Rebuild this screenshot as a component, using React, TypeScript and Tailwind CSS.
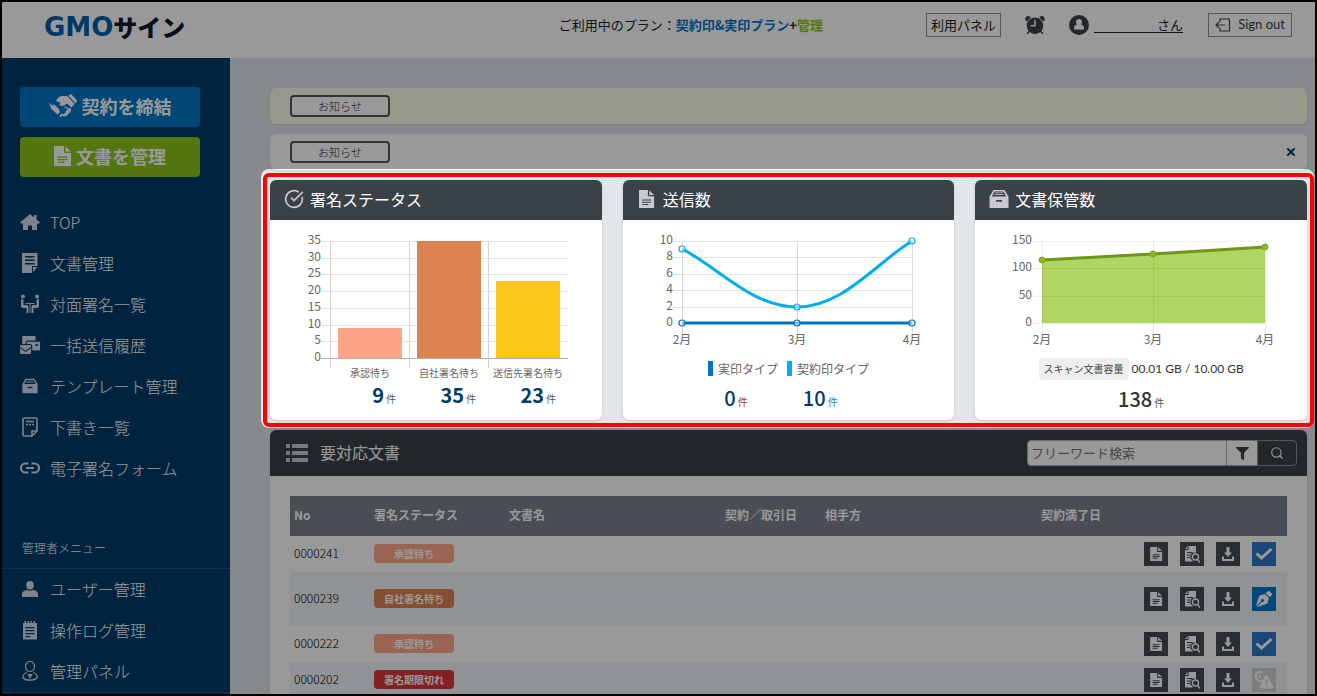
import React from "react";
import { CircleCheckBig, Search, X } from "lucide-react";
import { FaFilter, FaMailBulk, FaPenNib } from "react-icons/fa";
import { IoAlarm } from "react-icons/io5";

interface IconProps {
  className?: string;
}

const HomeIcon = ({ className }: IconProps) => (
  <svg viewBox="0 0 20 16" className={className} fill="currentColor" aria-hidden="true">
    <path d="M10 0l4 3.400V1h2.500v4.500L20 8.500l-.8 1H17V16h-5v-4.500H8V16H3V9.500H.8L0 8.500z" />
  </svg>
);

const FileIcon = ({ className }: IconProps) => (
  <svg viewBox="0 0 18 20" className={className} fill="currentColor" aria-hidden="true">
    <path
      fillRule="evenodd"
      d="M0 0h10v7h7v13H0zM3.500 10.500v1.300h10v-1.300zM3.500 13v1.300h10V13zM3.500 15.500v1.300h7v-1.300z"
    />
    <path d="M11.500 0.500l5.500 5h-5.500z" />
  </svg>
);

const NoteIcon = ({ className }: IconProps) => (
  <svg viewBox="0 0 16 20" className={className} fill="currentColor" aria-hidden="true">
    <path fillRule="evenodd" d="M0 0h15.500v13H10v7H0zM3 3v1.500h9.500V3zM3 6.500V8h9.500V6.500zM3 10v1.500h9.500V10z" />
    <path d="M11 14h4.500L11 19z" />
  </svg>
);

const MeetingIcon = ({ className }: IconProps) => (
  <svg viewBox="0 0 20 20" className={className} fill="currentColor" aria-hidden="true">
    <circle cx="3" cy="2.500" r="2" />
    <circle cx="17" cy="2.500" r="2" />
    <path d="M1 6q0-1 1-1t1.500 1v5h3.500q1.500 0 1.500 1.500V19H6.500v-5H3q-2 0-2-2zM19 6q0-1-1-1t-1.500 1v5H13q-1.500 0-1.500 1.500V19h2v-5H17q2 0 2-2z" />
    <path d="M5.500 9h9v1h-9zM9.500 10h1v9h-1z" />
  </svg>
);

const DrawerIcon = ({ className }: IconProps) => (
  <svg viewBox="0 0 20 18" className={className} fill="currentColor" aria-hidden="true">
    <path fillRule="evenodd" d="M4.500 0h11L19.500 6.500V18H.5V6.500zM5.500 1.500L2.800 6.500h14.400l-2.700-5zM7 10v1.800h6V10z" />
    <path d="M6 2.500h8v.8H6zM5.300 4.200h9.400V5H5.300z" />
  </svg>
);

const DraftIcon = ({ className }: IconProps) => (
  <svg viewBox="0 0 16 20" className={className} fill="none" stroke="currentColor" strokeWidth="1.600" aria-hidden="true">
    <path d="M10 19H2Q1 19 1 18V2Q1 1 2 1H14Q15 1 15 2V14zM10 19V14H15" />
    <path d="M4 4.500H12" />
    <path d="M4 7.500H12" strokeDasharray="2 1" />
  </svg>
);

const ChainIcon = ({ className }: IconProps) => (
  <svg viewBox="0 0 20 12" className={className} fill="none" stroke="currentColor" strokeWidth="2.200" aria-hidden="true">
    <path d="M8.500 1.500H5.500a4.500 4.500 0 0 0 0 9H8.500M11.500 1.500H14.500a4.500 4.500 0 0 1 0 9H11.500M6 6H14" />
  </svg>
);

const PersonIcon = ({ className }: IconProps) => (
  <svg viewBox="0 0 16 16" className={className} fill="currentColor" aria-hidden="true">
    <ellipse cx="8" cy="4.200" rx="3.800" ry="4.200" />
    <path d="M0 16v-3q0-3 5-4.200 3 2 6 0Q16 10 16 13v3z" />
  </svg>
);

const LogIcon = ({ className }: IconProps) => (
  <svg viewBox="0 0 16 20" className={className} fill="currentColor" aria-hidden="true">
    <path fillRule="evenodd" d="M1 3h14v16.500H1zM3.500 7v1.300h9V7zM3.500 10v1.300h9V10zM3.500 13v1.300h9V13zM3.500 16v1.300h5V16z" />
    <path d="M2.500 1h1.500v3H2.500zM5.500 1H7v3H5.500zM8.500 1H10v3H8.500zM11.500 1H13v3h-1.500z" />
  </svg>
);

const AdminIcon = ({ className }: IconProps) => (
  <svg viewBox="0 0 16 20" className={className} fill="none" stroke="currentColor" strokeWidth="1.200" aria-hidden="true">
    <ellipse cx="8" cy="5.500" rx="4.500" ry="5" />
    <path d="M5 11.500Q.7 13 .7 16.500 3 19.200 8 19.200t7.300-2.700Q15.300 13 11 11.500" />
    <path d="M5.500 13h5L8 18z" fill="currentColor" stroke="none" />
  </svg>
);

const HandshakeIcon = ({ className }: IconProps) => (
  <svg viewBox="0 0 28 24" className={className} fill="currentColor" aria-hidden="true">
    <path d="M19.500 1.500L22 0l6 6.500-1.500 3z" />
    <path d="M7 7Q9.500 2 13 2L18.500 2l7 8-3 3.500-4.500-4Q15 12 12 12 9.500 11.500 11.500 8.500z" />
    <path d="M0 8.500l3.500 3L5 10.500l4.500 4 1.500 3.500L8.500 20.500 2.500 15z" />
    <path
      d="M11.500 22l1.500-1.500M15 21l4-3M17.500 18l3.500-3"
      stroke="currentColor"
      strokeWidth="2"
      strokeLinecap="round"
    />
    <path d="M15.500 12.500l5.500 3.500q1 2-1.500 2.500l-2.500 3q-2 1-3.500-.5" fill="none" stroke="currentColor" strokeWidth="1.200" />
  </svg>
);

const UserCircleIcon = ({ className }: IconProps) => (
  <svg viewBox="0 0 20 20" className={className} aria-hidden="true">
    <circle cx="10" cy="10" r="10" fill="currentColor" />
    <path d="M10 4a3 3 0 0 1 3 3q0 1.500-1 2.500 3 .8 3 3.500v1.500H5V13q0-2.700 3-3.500Q7 8.500 7 7a3 3 0 0 1 3-3z" fill="#fff" />
  </svg>
);

const SignOutIcon = ({ className }: IconProps) => (
  <svg viewBox="0 0 16 14" className={className} fill="none" stroke="currentColor" strokeWidth="1.200" aria-hidden="true">
    <path d="M5 4V1H14.500V13H5V10M10 7H1M4 4L1 7L4 10" />
  </svg>
);

const ListIcon = ({ className }: IconProps) => (
  <svg viewBox="0 0 22 18" className={className} fill="currentColor" aria-hidden="true">
    <path d="M0 0h4v4H0zM6 0h16v4H6zM0 7h4v4H0zM6 7h16v4H6zM0 14h4v4H0zM6 14h16v4H6z" />
  </svg>
);

const PreviewIcon = ({ className }: IconProps) => (
  <svg viewBox="0 0 16 17" className={className} fill="currentColor" aria-hidden="true">
    <path fillRule="evenodd" d="M4.500 0H12v7a4 4 0 0 0-4 7l1 1.500H1V4h3.500zM3 6v1h7V6zM3 8.500v1h4.500v-1zM3 11v1h4v-1z" />
    <path d="M3.500 0v3H1z" />
    <path d="M13.500 13.500L16 16.500" stroke="currentColor" strokeWidth="1.500" />
    <circle cx="11.500" cy="11" r="3" fill="none" stroke="currentColor" strokeWidth="1.300" />
  </svg>
);

const DownloadIcon = ({ className }: IconProps) => (
  <svg viewBox="0 0 12 14" className={className} fill="currentColor" aria-hidden="true">
    <path d="M4.500 0h3v5.500H10L6 10 2 5.500h2.500zM0 9.500h2V12h8V9.500h2V14H0z" />
  </svg>
);

const CheckIcon = ({ className }: IconProps) => (
  <svg viewBox="0 0 18 14" className={className} fill="none" stroke="currentColor" strokeWidth="3" aria-hidden="true">
    <path d="M1.500 6.500L6.500 11L16.500 2" />
  </svg>
);

const ExpiredIcon = ({ className }: IconProps) => (
  <svg viewBox="0 0 20 20" className={className} fill="none" stroke="currentColor" aria-hidden="true">
    <circle cx="6.500" cy="6.500" r="4.700" strokeWidth="1.800" strokeDasharray="24 6" />
    <path d="M6.500 4v3H4" strokeWidth="1" />
    <path d="M12.500 5l7 13h-14z" fill="currentColor" strokeLinejoin="round" />
    <path d="M12.500 9v5M12.500 15.500v1.500" stroke="#d2d2d2" strokeWidth="1.500" />
  </svg>
);

const menu = [
  { name: "TOP", icon: <HomeIcon className="h-4 w-5" /> },
  { name: "文書管理", icon: <NoteIcon className="h-5 w-4" /> },
  { name: "対面署名一覧", icon: <MeetingIcon className="size-5" /> },
  { name: "一括送信履歴", icon: <FaMailBulk className="size-5" /> },
  { name: "テンプレート管理", icon: <DrawerIcon className="h-4 w-4" /> },
  { name: "下書き一覧", icon: <DraftIcon className="h-5 w-4" /> },
  { name: "電子署名フォーム", icon: <ChainIcon className="h-3 w-5" /> },
];

const adminMenu = [
  { name: "ユーザー管理", icon: <PersonIcon className="size-4" /> },
  { name: "操作ログ管理", icon: <LogIcon className="h-5 w-4" /> },
  { name: "管理パネル", icon: <AdminIcon className="h-5 w-4" /> },
];

const MenuLink = ({ name, icon }: { name: string; icon: React.ReactNode }) => (
  <a href="#" className="flex h-[41px] items-center gap-[10px] pb-[2px] pl-[18px] text-base font-light text-white">
    <span className="flex w-5 justify-center text-[#d2dce4]">{icon}</span>
    {name}
  </a>
);

const Card = ({ title, icon, children }: { title: string; icon: React.ReactNode; children: React.ReactNode }) => (
  <section className="rounded-md bg-white shadow">
    <h2 className="flex h-10 items-center gap-[6px] rounded-t-md bg-[#3a4147] pb-[2px] pl-[14px] text-base text-white">
      <span className="flex w-5 justify-center text-[#c8cacc]">{icon}</span>
      {title}
    </h2>
    <div className="h-[200px]">{children}</div>
  </section>
);

const Count = ({
  value,
  unit = "text-[#555]",
  tone = "font-bold text-[#003c69]",
}: {
  value: number;
  unit?: string;
  tone?: string;
}) => (
  <p className="text-right">
    <span className={`text-xl leading-6 ${tone}`}>{value}</span>
    <span className={`ml-[2px] text-[10px] ${unit}`}>件</span>
  </p>
);

const bars = [
  { label: "承認待ち", value: 9, color: "#ffa585" },
  { label: "自社署名待ち", value: 35, color: "#dc8150" },
  { label: "送信先署名待ち", value: 23, color: "#fac81a" },
];

const BarChart = () => (
  <svg width="320" height="163" className="block" fontSize="12" fill="#666">
    {[35, 30, 25, 20, 15, 10, 5, 0].map((tick, i) => (
      <g key={tick}>
        <rect x="51" y={21 + Math.round(i * 16.7)} width="247" height="1" fill={tick === 0 ? "#b0b0b0" : "#e3e3e3"} />
        <text x="51" y={24 + Math.round(i * 16.7)} textAnchor="end">
          {tick}
        </text>
      </g>
    ))}
    {bars.map((bar, i) => (
      <g key={bar.label}>
        <rect x={60 + i * 79} y="21" width="1" height="127" fill="#d4d4d4" />
        <rect
          x={68 + i * 79}
          y={138 - Math.round(bar.value * 3.343)}
          width="64"
          height={Math.round(bar.value * 3.343)}
          fill={bar.color}
        />
        <text x={100 + i * 79} y="157" textAnchor="middle" fontSize="10">
          {bar.label}
        </text>
      </g>
    ))}
  </svg>
);

const SendChart = () => (
  <svg width="320" height="130" className="block" fontSize="12" fill="#666">
    {[10, 8, 6, 4, 2, 0].map((tick, i) => (
      <g key={tick}>
        <rect x="50" y={21 + Math.round(i * 16.4)} width="239" height="1" fill="#e3e3e3" />
        <text x="50" y={24 + Math.round(i * 16.4)} textAnchor="end">
          {tick}
        </text>
      </g>
    ))}
    {["2月", "3月", "4月"].map((month, i) => (
      <g key={month}>
        <rect x={59 + i * 115} y="21" width="1" height="92" fill="#d9d9d9" />
        <text x={59 + i * 115} y="124" textAnchor="middle">
          {month}
        </text>
      </g>
    ))}
    <g fill="none" strokeWidth="3">
      <path d="M59 103H289" stroke="#0074c2" />
      <path d="M59 29C95 47 129 87 174 87C220 87 253 43 289 21" stroke="#00aeef" />
    </g>
    <g fill="#fff" fillOpacity="0.500" strokeWidth="1.200">
      {[59, 174, 289].map((x) => (
        <circle key={x} cx={x} cy="103" r="3" stroke="#0074c2" />
      ))}
      <circle cx="59" cy="29" r="3" stroke="#00aeef" />
      <circle cx="174" cy="87" r="3" stroke="#00aeef" />
      <circle cx="289" cy="21" r="3" stroke="#00aeef" />
    </g>
  </svg>
);

const StorageChart = () => (
  <svg width="320" height="130" className="block" fontSize="12" fill="#666">
    <path d="M67 40L178 34L290 27V103H67z" fill="#afd562" />
    {[150, 100, 50, 0].map((tick, i) => (
      <g key={tick}>
        <rect x="58" y={21 + Math.round(i * 27.4)} width="232" height="1" fill="#000" fillOpacity="0.060" />
        <text x="57" y={24 + Math.round(i * 27.4)} textAnchor="end">
          {tick}
        </text>
      </g>
    ))}
    {["2月", "3月", "4月"].map((month, i) => (
      <g key={month}>
        <rect x={67 + Math.round(i * 111.3)} y="21" width="1" height="92" fill="#000" fillOpacity="0.080" />
        <text x={67 + Math.round(i * 111.3)} y="124" textAnchor="middle">
          {month}
        </text>
      </g>
    ))}
    <path d="M67 40L178 34L290 27" fill="none" stroke="#6f961a" strokeWidth="3" />
    <g fill="#8bbb22" stroke="#7aa81c" strokeWidth="1">
      <circle cx="67" cy="40" r="3" />
      <circle cx="178" cy="34" r="3" />
      <circle cx="290" cy="27" r="3" />
    </g>
  </svg>
);

const rows = [
  {
    no: "0000241",
    status: "承認待ち",
    badge: "bg-[#ffa889]",
    row: "h-9",
    action: "確認",
    button: "bg-[#2e76c8]",
    icon: <CheckIcon className="h-[14px] w-[18px]" />,
  },
  {
    no: "0000239",
    status: "自社署名待ち",
    badge: "bg-[#de8350]",
    row: "h-[54px] bg-[#f0f6fa]",
    action: "署名",
    button: "bg-[#0078ca]",
    icon: <FaPenNib className="size-4" />,
  },
  {
    no: "0000222",
    status: "承認待ち",
    badge: "bg-[#ffa889]",
    row: "h-9",
    action: "確認",
    button: "bg-[#2e76c8]",
    icon: <CheckIcon className="h-[14px] w-[18px]" />,
  },
  {
    no: "0000202",
    status: "署名期限切れ",
    badge: "bg-[#dc3439]",
    row: "h-9 bg-[#f0f6fa]",
    action: "期限切れ",
    button: "bg-[#d2d2d2]",
    icon: <ExpiredIcon className="size-5" />,
  },
];

const darkButton = "flex size-6 items-center justify-center bg-[#434b52] text-white";

export default function App() {
  return (
    <div className="flex h-screen flex-col overflow-hidden border-2 border-black bg-[#e2e6e9] font-['Noto_Sans_CJK_JP',sans-serif] text-[#222]">
      {/* Header */}
      <header className="flex h-14 shrink-0 items-center bg-white pr-[23px] pb-[10px] pl-[42px] text-[13px]">
        <h1 className="flex items-center pt-1 text-2xl leading-6">
          <span className="font-['DejaVu_Sans',sans-serif] text-[26px] font-bold text-[#0060ae]">GMO</span>
          <span className="font-black text-[#10182c]">サイン</span>
        </h1>
        <p className="mr-[103px] ml-auto">
          ご利用中のプラン：
          <span className="font-bold text-[#0078ca]">契約印&amp;実印プラン</span>
          <span className="font-bold">+</span>
          <span className="font-bold text-[#8dc41c]">管理</span>
        </p>
        <button className="h-6 border border-[#8a9096] px-1 leading-5">利用パネル</button>
        <IoAlarm className="ml-[22px] size-6 text-[#3a4147]" />
        <UserCircleIcon className="ml-[22px] size-5 text-[#3a4147]" />
        <a href="#" className="ml-[5px] flex w-[89px] justify-end border-b border-[#222] leading-[14px]">
          さん
        </a>
        <button className="ml-[25px] flex h-6 w-[84px] items-center justify-between border border-[#8a9096] px-[6px] font-['Lato',sans-serif] text-[#3a4147]">
          <SignOutIcon className="h-[14px] w-4" />
          Sign out
        </button>
      </header>

      <div className="flex min-h-0 grow">
        {/* Sidebar */}
        <nav className="w-[228px] shrink-0 bg-[#003c69]">
          <div className="grid gap-[10px] pt-[29px] pr-[30px] pb-[25px] pl-[18px] text-lg font-bold text-white">
            <button className="flex h-10 items-center justify-center gap-[5px] rounded bg-[#0076c6] pb-[2px]">
              <HandshakeIcon className="h-6 w-7" />
              契約を締結
            </button>
            <button className="flex h-10 items-center justify-center gap-1 rounded bg-[#8dc41c] pb-[2px]">
              <FileIcon className="h-5 w-[18px]" />
              文書を管理
            </button>
          </div>
          {menu.map((item) => (
            <MenuLink key={item.name} name={item.name} icon={item.icon} />
          ))}
          <p className="mt-[46px] border-b border-[#1c5480] pt-[4px] pb-[11px] pl-5 text-xs leading-[18px] font-light text-white">
            管理者メニュー
          </p>
          <div className="border-b border-[#1c5480]">
            {adminMenu.map((item) => (
              <MenuLink key={item.name} name={item.name} icon={item.icon} />
            ))}
          </div>
        </nav>

        <main className="min-w-0 grow pt-[30px] pr-2 pl-10">
          {/* Notices */}
          <div className="grid gap-[10px]">
            <div className="flex h-9 items-center rounded-md bg-[#fffeec] px-5 shadow">
              <span className="w-[100px] rounded border-2 border-[#555] bg-white text-center text-[11px] leading-[18px] font-light">
                お知らせ
              </span>
            </div>
            <div className="flex h-9 items-center justify-between rounded-md bg-white pr-[10px] pl-5 shadow">
              <span className="w-[100px] rounded border-2 border-[#555] bg-white text-center text-[11px] leading-[18px] font-light">
                お知らせ
              </span>
              <button aria-label="閉じる" className="text-[#003c69]">
                <X className="size-3" strokeWidth={4} />
              </button>
            </div>
          </div>

          {/* Summary cards, everything around them is dimmed */}
          <div className="relative z-10 my-[10px]">
            <div className="pointer-events-none absolute -top-[11px] -right-[7px] -bottom-2 -left-[9px] -z-10 rounded-lg shadow-[0_0_0_9999px_rgba(0,0,0,0.4)]" />
            <div className="pointer-events-none absolute -inset-[7px] rounded-md border-4 border-[#f00]" />
            <div className="grid grid-cols-3 gap-[21px]">
              <Card title="署名ステータス" icon={<CircleCheckBig className="size-5" />}>
                <BarChart />
                <div className="grid w-[286px] grid-cols-[repeat(3,80px)] pl-[46px]">
                  {bars.map((bar) => (
                    <Count key={bar.label} value={bar.value} />
                  ))}
                </div>
              </Card>
              <Card title="送信数" icon={<FileIcon className="h-[18px] w-4" />}>
                <SendChart />
                <div className="flex h-9 items-center justify-center gap-[9px] text-xs text-[#666]">
                  <span className="border-l-[5px] border-[#0074c2] pl-[5px] leading-[15px]">実印タイプ</span>
                  <span className="border-l-[5px] border-[#00aeef] pl-[5px] leading-[15px]">契約印タイプ</span>
                </div>
                <div className="grid grid-cols-[90px_90px] pl-[35px]">
                  <Count value={0} unit="text-[#a0403a]" tone="font-medium text-[#003c69]" />
                  <Count value={10} unit="text-[#2a86b8]" tone="font-medium text-[#003c69]" />
                </div>
              </Card>
              <Card title="文書保管数" icon={<DrawerIcon className="h-[18px] w-5" />}>
                <StorageChart />
                <div className="flex h-[37px] items-center justify-center gap-[3px] font-['Lato','Noto_Sans_CJK_JP',sans-serif] text-xs text-[#333]">
                  <span className="rounded bg-[#eee] px-[5px] text-[10px] leading-[22px] text-[#444]">スキャン文書容量</span>
                  00.01 GB / 10.00 GB
                </div>
                <div className="flex justify-center">
                  <Count value={138} tone="font-medium text-[#333]" />
                </div>
              </Card>
            </div>
          </div>

          {/* Documents */}
          <section className="rounded-t-md bg-white shadow">
            <div className="flex h-[46px] items-center rounded-t-md bg-[#3a4347] pr-[10px] pl-4 text-white">
              <ListIcon className="h-[18px] w-[22px] text-[#c8cacc]" />
              <h2 className="ml-3 pb-[2px] text-base">要対応文書</h2>
              <form className="ml-auto flex h-[26px]">
                <input
                  type="text"
                  aria-label="フリーワード検索"
                  placeholder="フリーワード検索"
                  className="w-[200px] rounded-l-sm border border-[#a5b4c0] bg-white px-[3px] text-[13px] placeholder:text-[#777]"
                />
                <button
                  type="button"
                  aria-label="絞り込み"
                  className="flex w-[30px] items-center justify-center border-y border-[#a5b4c0] bg-white text-[#3a4147]"
                >
                  <FaFilter className="size-[13px]" />
                </button>
                <button
                  type="button"
                  aria-label="検索"
                  className="flex w-10 items-center justify-center rounded-r-sm border border-[#8a9096]"
                >
                  <Search className="size-[14px]" />
                </button>
              </form>
            </div>
            <div className="px-5 pt-5">
              <table className="w-full table-fixed text-left text-xs">
                <thead>
                  <tr className="h-10 bg-[#78828a] text-white">
                    <th className="w-20 px-1 pb-[2px]">No</th>
                    <th className="w-[135px] px-1 pb-[2px]">署名ステータス</th>
                    <th className="px-1 pb-[2px]">文書名</th>
                    <th className="w-[100px] px-1 pb-[2px]">契約／取引日</th>
                    <th className="px-1 pb-[2px]">相手方</th>
                    <th className="w-[100px] px-1 pb-[2px]">契約満了日</th>
                    <th className="w-[150px]"></th>
                  </tr>
                </thead>
                <tbody>
                  {rows.map((item) => (
                    <tr key={item.no} className={item.row}>
                      <td className="px-1 pb-[2px] font-light text-black">{item.no}</td>
                      <td className="px-1 pb-[2px]">
                        <span className={`block w-20 rounded-sm text-center text-[10px] leading-[19px] font-bold text-white ${item.badge}`}>
                          {item.status}
                        </span>
                      </td>
                      <td></td>
                      <td></td>
                      <td></td>
                      <td></td>
                      <td>
                        <div className="flex justify-end gap-3 pr-[11px]">
                          <button aria-label="文書" className={darkButton}>
                            <FileIcon className="h-[14px] w-[13px]" />
                          </button>
                          <button aria-label="プレビュー" className={darkButton}>
                            <PreviewIcon className="h-[17px] w-4" />
                          </button>
                          <button aria-label="ダウンロード" className={darkButton}>
                            <DownloadIcon className="h-[14px] w-3" />
                          </button>
                          <button aria-label={item.action} className={`flex size-6 items-center justify-center text-white ${item.button}`}>
                            {item.icon}
                          </button>
                        </div>
                      </td>
                    </tr>
                  ))}
                </tbody>
              </table>
            </div>
          </section>
        </main>
      </div>
    </div>
  );
}
